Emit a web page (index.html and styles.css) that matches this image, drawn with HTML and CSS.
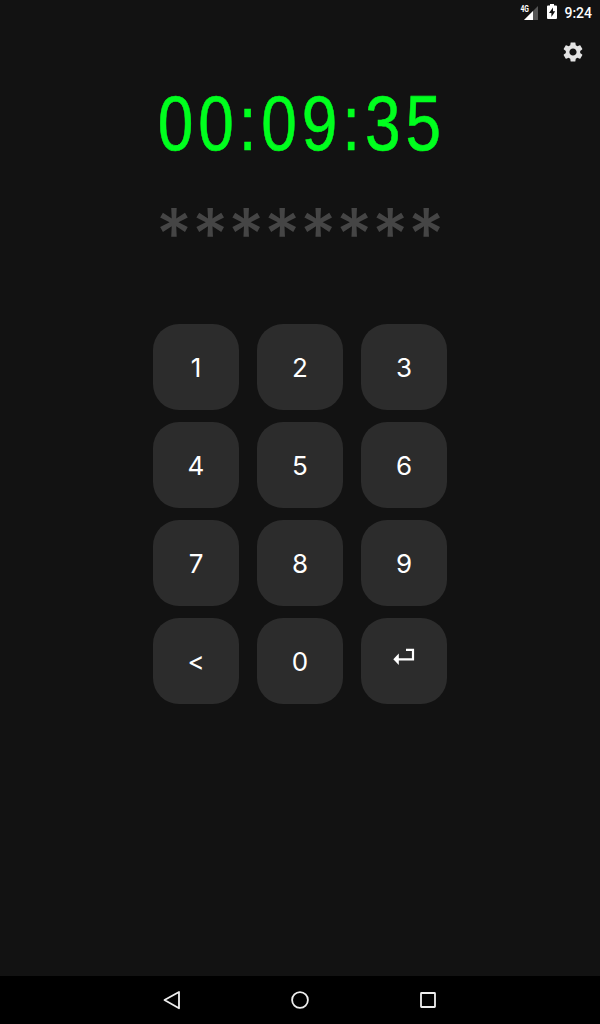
FILE: index.html
```html
<!DOCTYPE html>
<html lang="en">
<head>
    <meta charset="UTF-8">
    <meta name="viewport" content="width=device-width, initial-scale=1.0">
    <title>Keypad</title>
    <link rel="stylesheet" href="styles.css">
</head>
<body>
    <header class="status-bar">
        <span class="network">4G</span>
        <svg class="signal" width="14" height="14" viewBox="0 0 14 14">
            <path d="M14 0V14H0Z" fill="#555"/>
            <path d="M9 5V14H0Z" fill="#fff"/>
        </svg>
        <svg class="battery" width="10" height="15" viewBox="0 0 10 15">
            <path fill="#fff" fill-rule="evenodd" d="M3 0H7V1.5H9Q10 1.5 10 2.5V14Q10 15 9 15H1Q0 15 0 14V2.5Q0 1.5 1 1.5H3ZM6 3.5L2 9H4.4V13L8.2 7.3H6Z"/>
        </svg>
        <span class="time">9:24</span>
    </header>

    <div class="toolbar">
        <svg width="24" height="24" viewBox="0 0 24 24" fill="#e3e3e3">
            <path d="M19.14 12.94c.04-.3.06-.61.06-.94 0-.32-.02-.64-.07-.94l2.03-1.58c.18-.14.23-.41.12-.61l-1.92-3.32c-.12-.22-.37-.29-.59-.22l-2.39.96c-.5-.38-1.03-.7-1.62-.94l-.36-2.54c-.04-.24-.24-.41-.48-.41h-3.84c-.24 0-.43.17-.47.41l-.36 2.54c-.59.24-1.13.57-1.62.94l-2.39-.96c-.22-.08-.47 0-.59.22L2.74 8.87c-.12.21-.08.47.12.61l2.03 1.58c-.05.3-.09.63-.09.94s.02.64.07.94l-2.03 1.58c-.18.14-.23.41-.12.61l1.92 3.32c.12.22.37.29.59.22l2.39-.96c.5.38 1.03.7 1.62.94l.36 2.54c.05.24.24.41.48.41h3.84c.24 0 .44-.17.47-.41l.36-2.54c.59-.24 1.13-.56 1.62-.94l2.39.96c.22.08.47 0 .59-.22l1.92-3.32c.12-.22.07-.47-.12-.61l-2.01-1.58zM12 15.6c-1.98 0-3.6-1.62-3.6-3.6s1.62-3.6 3.6-3.6 3.6 1.62 3.6 3.6-1.62 3.6-3.6 3.6z"/>
        </svg>
    </div>

    <main>
        <div class="timer">00:09:35</div>
        <div class="code">********</div>

        <div class="keypad">
            <button>1</button>
            <button>2</button>
            <button>3</button>
            <button>4</button>
            <button>5</button>
            <button>6</button>
            <button>7</button>
            <button>8</button>
            <button>9</button>
            <button>&lt;</button>
            <button>0</button>
            <button class="enter">
                <svg width="22" height="18" viewBox="0 0 22 18">
                    <path d="M13 1.9H20V11.3H5" fill="none" stroke="#fff" stroke-width="2.2"/>
                    <path d="M0.3 11.3L5.8 5.6V17Z" fill="#fff"/>
                </svg>
            </button>
        </div>
    </main>

    <nav class="nav-bar">
        <svg width="24" height="24" viewBox="0 0 24 24">
            <path d="M4.5 12L19 4V20.3Z"/>
        </svg>
        <svg width="24" height="24" viewBox="0 0 24 24">
            <circle cx="12" cy="12" r="7.9"/>
        </svg>
        <svg width="24" height="24" viewBox="0 0 24 24">
            <rect x="5" y="5" width="14" height="14" rx="0.5"/>
        </svg>
    </nav>
</body>
</html>
```
FILE: styles.css
```css
body {
    display: flex;
    flex-direction: column;
    height: 1024px;
    margin: 0;
    background-color: #121212;
    color: white;
    font-family: Inter, sans-serif;
    overflow: hidden;
}
.status-bar {
    display: flex;
    justify-content: flex-end;
    height: 24px;
    padding-right: 8px;
    font-family: Roboto, sans-serif;
}
.network {
    height: 9px;
    margin: 5px -6px 0 0;
    font-size: 9px;
    line-height: 9px;
    font-weight: bold;
    transform: scaleX(0.75);
}
.signal {
    margin-top: 6px;
}
.battery {
    margin: 4px 7px 0 9px;
}
.time {
    font-size: 14px;
    line-height: 26px;
    font-weight: 500;
}
.toolbar {
    display: flex;
    justify-content: flex-end;
    height: 46px;
    padding: 16px 15px 0 0;
    box-sizing: border-box;
}
main {
    flex: 1;
    display: flex;
    flex-direction: column;
    align-items: center;
}
.timer {
    height: 80px;
    margin: 13px 0 0 4px;
    color: #00ff1e;
    font-family: "Liberation Sans", Arial, sans-serif;
    font-size: 78px;
    line-height: 80px;
    letter-spacing: 6px;
    transform: scaleX(0.82);
    -webkit-text-stroke: 0.6px #00ff1e;
}
.code {
    height: 60px;
    margin-top: 35px;
    color: #454545;
    font-size: 70px;
    line-height: 72px;
    font-weight: 500;
    letter-spacing: -0.4px;
}
.keypad {
    display: grid;
    grid-template-columns: repeat(3, 86px);
    grid-auto-rows: 86px;
    gap: 12px 18px;
    margin-top: 66px;
}
.keypad button {
    display: flex;
    align-items: center;
    justify-content: center;
    padding: 0;
    background-color: #2c2c2c;
    border: none;
    border-radius: 26px;
    color: white;
    font-family: Inter, sans-serif;
    font-size: 26px;
}
.keypad .enter {
    padding: 0 0 9px;
}
.nav-bar {
    display: flex;
    align-items: center;
    justify-content: center;
    gap: 104px;
    height: 48px;
    background-color: black;
}
.nav-bar svg {
    fill: none;
    stroke: #eee;
    stroke-width: 1.8;
    stroke-linejoin: round;
}
```
